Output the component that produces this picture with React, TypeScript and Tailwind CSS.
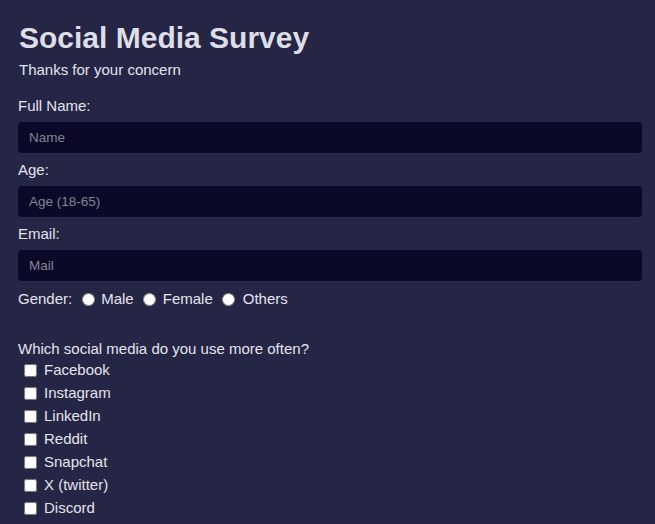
const socials = [
  "Facebook",
  "Instagram",
  "LinkedIn",
  "Reddit",
  "Snapchat",
  "X (twitter)",
  "Discord",
  "Others",
];

function Field({ label, placeholder }: { label: string; placeholder: string }) {
  return (
    <div className="flex flex-col">
      <label className="mt-2 mb-2 text-[15px] leading-[17px]">{label}</label>
      <input
        type="text"
        placeholder={placeholder}
        className="h-[31px] w-full rounded-[4px] bg-[#0a0a28] px-[11px] text-[13.5px] text-gray-200 outline-none placeholder:text-[#838391]"
      />
    </div>
  );
}

export default function App() {
  return (
    <div
      className="min-h-screen bg-[#252546] pl-[18px] pr-[13px] pt-[20px] text-[#e4e4ec]"
      style={{ fontFamily: '"Liberation Sans", Arial, sans-serif' }}
    >
      <h1 className="ml-px text-[30px] leading-[35px] font-bold text-[#dedee6]">
        Social Media Survey
      </h1>
      <p className="mt-[6px] ml-px text-[15px] leading-[17px]">Thanks for your concern</p>

      <form className="mt-[19px]">
        <div className="-mt-2">
          <Field label="Full Name:" placeholder="Name" />
        </div>
        <Field label="Age:" placeholder="Age (18-65)" />
        <Field label="Email:" placeholder="Mail" />

        {/* Gender */}
        <div className="mt-[10px] flex h-[17px] items-center text-[15px]">
          <span>Gender:</span>
          <input type="radio" name="gender" className="ml-[10px] h-[13px] w-[13px]" />
          <span className="ml-[6px]">Male</span>
          <input type="radio" name="gender" className="ml-[9px] h-[13px] w-[13px]" />
          <span className="ml-[7px]">Female</span>
          <input type="radio" name="gender" className="ml-[9px] h-[13px] w-[13px]" />
          <span className="ml-[8px]">Others</span>
        </div>

        <p className="mt-[32px] text-[15px] leading-[17px]">
          Which social media do you use more often?
        </p>
        <div className="mt-[2px] flex flex-col">
          {socials.map((s) => (
            <label key={s} className="flex h-[23px] items-center text-[15px]">
              <input type="checkbox" className="ml-[6px] h-[13px] w-[13px]" />
              <span className="ml-[7px]">{s}</span>
            </label>
          ))}
        </div>
      </form>
    </div>
  );
}
